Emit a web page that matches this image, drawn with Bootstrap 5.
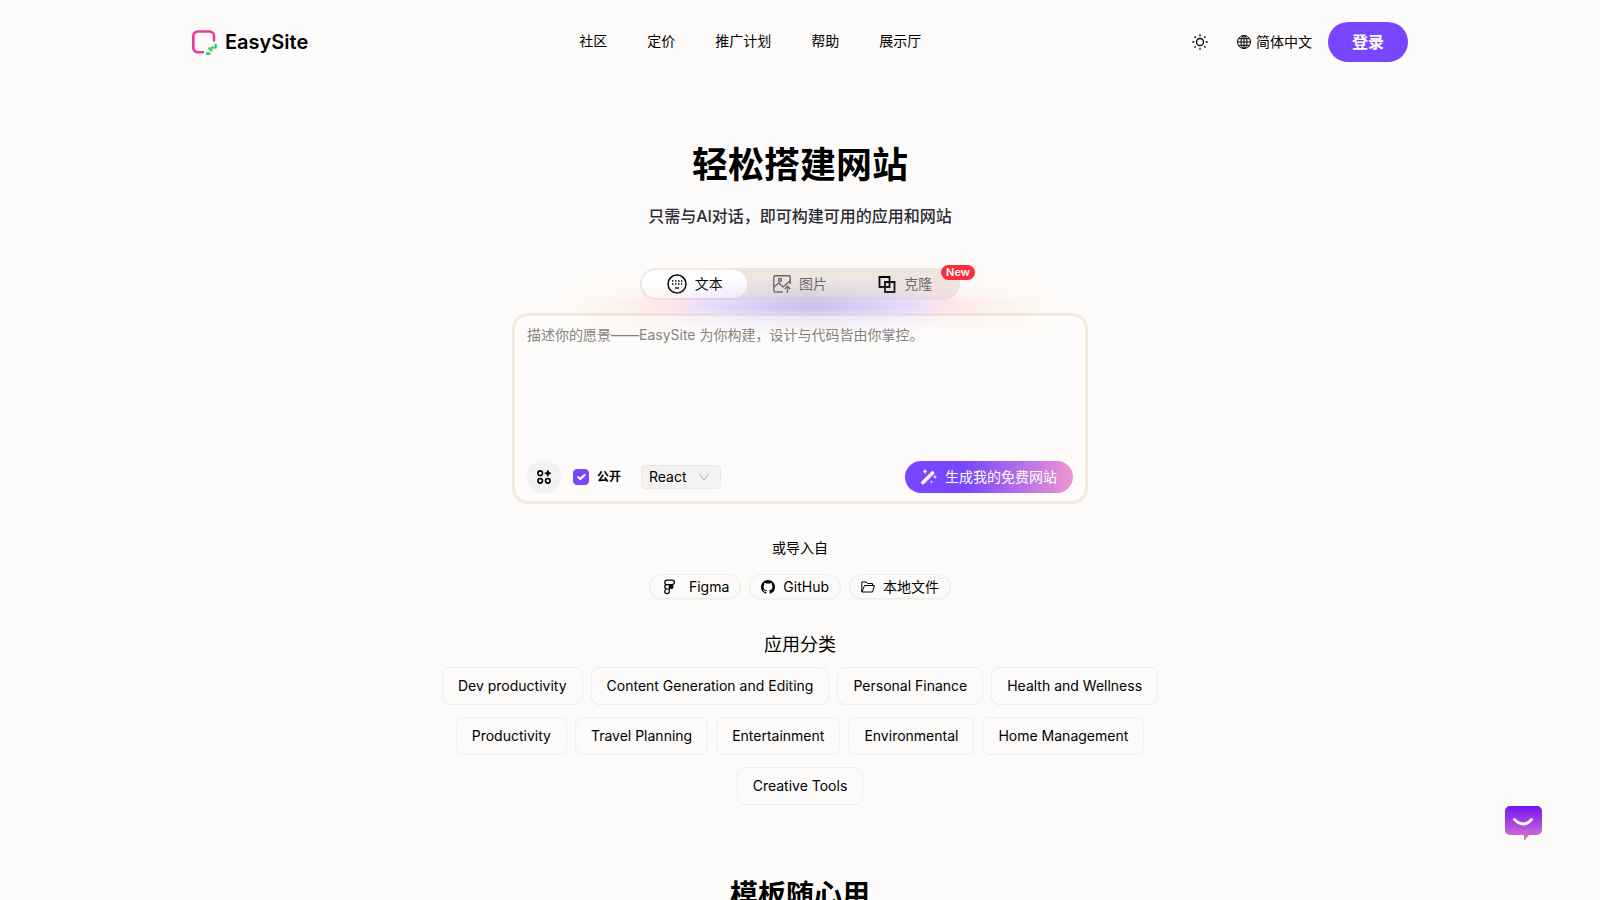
<!DOCTYPE html>
<html lang="zh-CN">
<head>
<meta charset="utf-8">
<meta name="viewport" content="width=device-width, initial-scale=1">
<title>EasySite</title>
<link href="https://cdn.jsdelivr.net/npm/bootstrap@5.3.0/dist/css/bootstrap.min.css" rel="stylesheet">
<style>
:root{--cream:#fdfbf9;--violet:#7846ff;--sand:#f1eadc}
body{background:var(--cream);color:#000;font-family:Inter,"Noto Sans CJK SC",sans-serif;font-size:14px;line-height:20px}
.shell{max-width:1216px}
.site-head{padding:22px 0}
.brand-name{font-size:20px;line-height:28px;font-weight:600;margin-left:8px}
.main-nav{gap:40px;padding-bottom:2px}
.main-nav a,.brand-link{color:#000;text-decoration:none}
.login{width:80px;height:40px;font-size:16px;font-weight:700;background:var(--violet);color:#fff}
.bare{background:none;border:0;padding:0;color:#000}
.hero{padding-top:61px}
h1{font-size:36px;line-height:40px;font-weight:700;margin-bottom:19px}
.tagline{font-size:16px;line-height:24px;font-weight:500;color:#2c2d36;margin-bottom:40px}
.modes{width:320px;height:32px;background:#eee6df;border-radius:16px;padding:2px}
.modes button{flex:1 1 0;height:28px;gap:8px;border-radius:14px;color:#6b6661}
.modes .on{background:#fff;color:#000}
.new-tag{position:absolute;right:-15px;top:-3px;height:15px;line-height:15px;font-size:11px;font-weight:600;padding:0 5px;border-radius:8px;background:#fb2c3c;color:#fff}
.glow{position:absolute;left:53%;top:10px;width:500px;height:56px;transform:translateX(-50%);pointer-events:none;
background:linear-gradient(90deg,#ffd9c200,#ffd9c240 12%,#ffc8d066 21%,#cbb8ff80 31%,#bfaef599 40%,#a998dc99 50%,#bfaef599 60%,#cbb8ff80 69%,#ffc8d066 78%,#ffd9c240 88%,#ffd9c200);
-webkit-mask-image:linear-gradient(#0000,#0006 30%,#000 44%,#000 56%,#0006 68%,#0000);mask-image:linear-gradient(#0000,#0006 30%,#000 44%,#000 56%,#0006 68%,#0000)}
.prompt{max-width:576px;margin-top:13px;border:3px solid var(--sand);border-radius:16px;padding:8px 12px 7px}
.prompt textarea{display:block;height:136px;resize:none;outline:0;background:none;padding:0;font-size:14px;line-height:22px}
.prompt textarea::placeholder{color:#85827e}
.tool-btn{width:34px;height:34px;border-radius:50%;background:#f3f2f0}
.prompt .form-check-input{width:16px;height:16px;margin:0;border-radius:4px}
.prompt .form-check-input:checked{background-color:var(--violet);border-color:var(--violet)}
.public{font-size:12px;font-weight:700;margin:0 20px 0 8px}
.stack-pick{width:80px;height:24px;appearance:none;border:1px solid #ebeae8;border-radius:4px;padding:0 7px;line-height:20px;color:#000;
background:#f3f2f0 url("data:image/svg+xml,%3Csvg xmlns='http://www.w3.org/2000/svg' viewBox='0 0 10 8' fill='none' stroke='%23b3b1af'%3E%3Cpath d='M.5 .8 5 7 9.5 .8'/%3E%3C/svg%3E") no-repeat right 11px center/10px 8px}
.generate{height:32px;padding:0 16px;gap:8px;border-radius:16px;color:#fff;background:linear-gradient(90deg,#7846ff 0,#7846ff 35%,#ee96ce)}
.import-label{margin:34px 0 16px}
.source{height:25px;padding:0 11px;gap:8px;border:1px solid #f0ede6;border-radius:13px;background:var(--cream);color:#000;box-shadow:0 1px 1px #0000000a}
h2{font-size:18px;line-height:28px;font-weight:400;margin:32px 0 8px}
.topics{max-width:760px;gap:12px 8px}
.topic{height:38px;padding:0 15px;border:1px solid #efedea;border-radius:8px;background:none;color:#000}
.templates{font-size:28px;line-height:36px;font-weight:700;margin:72px 0 0}
.chat{position:fixed;right:58px;bottom:59px}
svg{flex:none}
</style>
</head>
<body>
<header class="site-head shell container-fluid px-0 d-flex align-items-center justify-content-between">
  <a class="brand-link d-flex align-items-center" href="#">
    <svg width="25" height="25" viewBox="0 0 25 25" fill="none" stroke-linecap="round"><path d="M11 22.200H6a4.500 4.500 0 0 1-4.700-4.500V6A4.500 4.500 0 0 1 6 1.500h11.500A4.500 4.500 0 0 1 22 6v4.500" stroke="#e93a96" stroke-width="2.600"/><path d="M15 23.600h2.500M17.300 18.300l2 2M23.600 15v2.600M20.300 17.300l.5.500" stroke="#2bd168" stroke-width="2.600"/></svg>
    <span class="brand-name">EasySite</span>
  </a>
  <nav class="main-nav d-flex">
    <a href="#">社区</a><a href="#">定价</a><a href="#">推广计划</a><a href="#">帮助</a><a href="#">展示厅</a>
  </nav>
  <div class="d-flex align-items-center">
    <button class="bare d-flex" type="button" aria-label="主题"><svg width="16" height="16" viewBox="0 0 16 16" fill="none" stroke="#000" stroke-width="1.300"><circle cx="8" cy="8" r="3.500"/><path d="M8 .3v2M8 13.700v2M.3 8h2M13.700 8h2M2.500 2.500l1.300 1.300M12.200 12.200l1.300 1.300M2.500 13.500l1.300-1.300M12.200 3.800l1.300-1.300"/></svg></button>
    <button class="bare d-flex align-items-center ms-4 me-3 ps-1" type="button"><svg class="me-1" width="16" height="16" viewBox="0 0 16 16" fill="none" stroke="#000"><circle cx="8" cy="8" r="6.500"/><ellipse cx="8" cy="8" rx="3" ry="6.500"/><path d="M8 1.500v13M1.500 8h13M2.500 4.700h11M2.500 11.300h11"/></svg>简体中文</button>
    <button class="login btn rounded-pill p-0" type="button">登录</button>
  </div>
</header>
<main class="hero container-fluid d-flex flex-column align-items-center text-center">
  <h1>轻松搭建网站</h1>
  <p class="tagline">只需与AI对话，即可构建可用的应用和网站</p>
  <div class="modes position-relative d-flex">
    <button class="bare on d-flex align-items-center justify-content-center" type="button"><svg width="20" height="20" viewBox="0 0 20 20" fill="none" stroke="#000" stroke-width="1.500"><circle cx="10" cy="10" r="9"/><path d="M5 7h1.500M8 7h1.500M11 7h1.500M14 7h1.300M5 10h1.500M8 10h1.500M11 10h1.500M14 10h1.300M8 14h4"/></svg>文本</button>
    <button class="bare d-flex align-items-center justify-content-center" type="button"><svg width="18" height="18" viewBox="0 0 18 18" fill="none" stroke="#6b6661" stroke-width="1.400"><path d="M10 17H2a1.200 1.200 0 0 1-1.200-1.200V2A1.200 1.200 0 0 1 2 .8h14A1.200 1.200 0 0 1 17.200 2v7M1 12l5-4 4 4 7-6M14.500 18v-6.500M11.800 14l2.700-2.700 2.700 2.700"/><circle cx="7" cy="5" r="1.500"/></svg>图片</button>
    <button class="bare d-flex align-items-center justify-content-center" type="button"><svg width="18" height="18" viewBox="0 0 18 18" fill="none" stroke="#000" stroke-width="1.800"><path d="M1.500 2h10v10h-10zM7 7h9.500v10H7z"/></svg>克隆</button>
    <span class="new-tag">New</span>
    <div class="glow"></div>
  </div>
  <form class="prompt w-100">
    <textarea class="w-100 border-0" aria-label="描述" placeholder="描述你的愿景——EasySite 为你构建，设计与代码皆由你掌控。"></textarea>
    <div class="d-flex align-items-center">
      <button class="bare tool-btn d-flex align-items-center justify-content-center me-2" type="button" aria-label="工具"><svg width="14" height="14" viewBox="0 0 14 14" fill="none" stroke="#000" stroke-width="1.600"><circle cx="3.200" cy="3.200" r="2.300"/><circle cx="3.200" cy="10.800" r="2.300"/><circle cx="10.800" cy="10.800" r="2.300"/><path d="M10.800 0l1 2.200 2.200 1-2.200 1-1 2.200-1-2.200-2.200-1 2.200-1z" fill="#000" stroke-width=".6"/></svg></button>
      <input class="form-check-input ms-1" type="checkbox" id="public" checked>
      <label class="public" for="public">公开</label>
      <select class="stack-pick" aria-label="框架"><option>React</option></select>
      <button class="bare generate d-flex align-items-center ms-auto" type="button"><svg width="16" height="16" viewBox="0 0 16 16" fill="none" stroke="#fff" stroke-linecap="round"><path d="M2 13.500L11.500 4" stroke-width="3.600"/><path d="M9 5l2.200 2.200" stroke="#9d79ff" stroke-width=".6"/><path d="M4 .5l.7 1.300L6 2.500l-1.300.7L4 4.500l-.7-1.300L2 2.500l1.300-.7zM14 6.500l.5 1 1 .5-1 .5-.5 1-.5-1-1-.5 1-.5zM10.500 12l.3.700.7.3-.7.3-.3.700-.3-.7-.7-.3.700-.3z" fill="#fff" stroke-width=".4"/></svg>生成我的免费网站</button>
    </div>
  </form>
  <p class="import-label">或导入自</p>
  <div class="d-flex gap-2">
    <button class="source d-flex align-items-center" type="button"><svg width="16" height="16" viewBox="0 0 16 16" fill="none" stroke="#000" stroke-width="1.200"><path d="M6 1.200h5.200a2.200 2.200 0 0 1 0 4.400H6a2.200 2.200 0 0 1 0-4.400zM8.300 5.600H6a2.200 2.200 0 0 0 0 4.400h2.300zM8.300 10H6a2.300 2.300 0 1 0 2.300 2.300z"/><circle cx="10.400" cy="7.800" r="1.600" fill="#000"/></svg><span class="ps-1">Figma</span></button>
    <button class="source d-flex align-items-center" type="button"><svg width="14" height="14" viewBox="0 0 16 16"><path d="M8 0C3.580 0 0 3.580 0 8c0 3.540 2.290 6.530 5.470 7.590.4.070.55-.17.55-.38 0-.19-.01-.82-.01-1.490-2.010.37-2.530-.49-2.690-.94-.09-.23-.48-.94-.82-1.130-.28-.15-.68-.52-.01-.53.63-.01 1.080.58 1.230.82.72 1.210 1.870.87 2.330.66.07-.52.28-.87.51-1.070-1.780-.2-3.640-.89-3.640-3.950 0-.87.31-1.590.82-2.150-.08-.2-.36-1.020.08-2.120 0 0 .67-.21 2.200.82a7.600 7.600 0 0 1 4 0c1.530-1.040 2.200-.82 2.200-.82.44 1.100.16 1.920.08 2.120.51.56.82 1.270.82 2.150 0 3.070-1.870 3.750-3.650 3.950.29.25.54.73.54 1.480 0 1.070-.01 1.930-.01 2.200 0 .21.15.46.55.38A8 8 0 0 0 16 8c0-4.420-3.580-8-8-8z"/></svg>GitHub</button>
    <button class="source d-flex align-items-center" type="button"><svg width="14" height="14" viewBox="0 0 14 14" fill="none" stroke="#000"><path d="M11.500 5.500V3.500H6.500L5 2H.8v10h10.700l2-6.500H3.500L.8 12"/></svg>本地文件</button>
  </div>
  <h2>应用分类</h2>
  <div class="topics d-flex flex-wrap justify-content-center">
    <button class="topic" type="button">Dev productivity</button>
    <button class="topic" type="button">Content Generation and Editing</button>
    <button class="topic" type="button">Personal Finance</button>
    <button class="topic" type="button">Health and Wellness</button>
    <button class="topic" type="button">Productivity</button>
    <button class="topic" type="button">Travel Planning</button>
    <button class="topic" type="button">Entertainment</button>
    <button class="topic" type="button">Environmental</button>
    <button class="topic" type="button">Home Management</button>
    <button class="topic" type="button">Creative Tools</button>
  </div>
  <h2 class="templates">模板随心用</h2>
</main>
<button class="bare chat d-flex" type="button" aria-label="聊天"><svg width="37" height="35" viewBox="0 0 37 35"><defs><linearGradient id="cg" x2="0" y2="1"><stop stop-color="#7414f5"/><stop offset="1" stop-color="#dc78d0"/></linearGradient></defs><path d="M5 0h27a5 5 0 0 1 5 5v19a5 5 0 0 1-5 5h-8l-5 6v-6H5a5 5 0 0 1-5-5V5a5 5 0 0 1 5-5z" fill="url(#cg)"/><path d="M9.500 13.500q9 9 17 0" fill="none" stroke="#fff" stroke-width="2.800" stroke-linecap="round"/></svg></button>
<script src="https://cdn.jsdelivr.net/npm/bootstrap@5.3.0/dist/js/bootstrap.bundle.min.js"></script>
</body>
</html>
